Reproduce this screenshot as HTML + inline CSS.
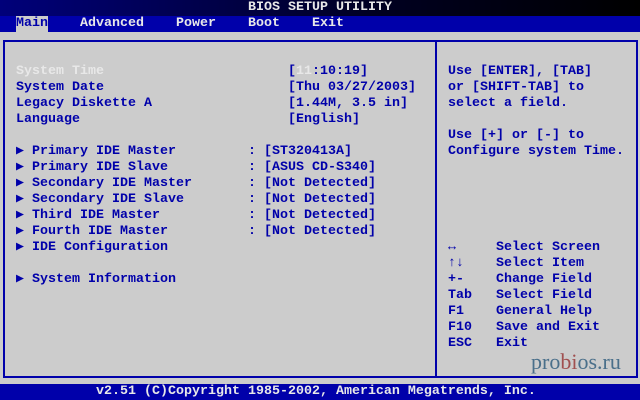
<!DOCTYPE html>
<html><head><meta charset="utf-8"><style>
*{margin:0;padding:0}
body{width:640px;height:400px;background:#cccccc;position:relative;overflow:hidden;font-family:"Liberation Mono",monospace;font-size:13.33px;font-weight:bold;line-height:16px;color:#0000aa}
.t{position:absolute;white-space:pre}
#title{position:absolute;left:0;top:0;width:640px;height:16px;background:linear-gradient(90deg,#00007a,#000020 60%,#000)}
#menu{position:absolute;left:0;top:16px;width:640px;height:16px;background:#0000aa}
#foot{position:absolute;left:0;top:384px;width:640px;height:16px;background:#0000aa}
.w{color:#e8e8e8}
#frame{position:absolute;left:3px;top:40px;width:631px;height:334px;border:2px solid #0000aa}
#div{position:absolute;left:435px;top:40px;width:2px;height:338px;background:#0000aa}
</style></head><body>
<div id="title"></div>
<div class="t w" style="left:248px;top:0">BIOS SETUP UTILITY</div>
<div id="menu"></div>
<div class="t" style="left:16px;top:16px;background:#cccccc;width:32px">Main</div>
<div class="t w" style="left:80px;top:16px">Advanced</div>
<div class="t w" style="left:176px;top:16px">Power</div>
<div class="t w" style="left:248px;top:16px">Boot</div>
<div class="t w" style="left:312px;top:16px">Exit</div>
<div id="frame"></div><div id="div"></div>
<div class="t w" style="left:16px;top:64px">System Time</div>
<div class="t" style="left:16px;top:80px">System Date
Legacy Diskette A
Language</div>
<div class="t" style="left:288px;top:64px">[<span class="w">11</span>:10:19]
[Thu 03/27/2003]
[1.44M, 3.5 in]
[English]</div>
<div class="t" style="left:16px;top:144px">▶
▶
▶
▶
▶
▶
▶

▶</div>
<div class="t" style="left:32px;top:144px">Primary IDE Master
Primary IDE Slave
Secondary IDE Master
Secondary IDE Slave
Third IDE Master
Fourth IDE Master
IDE Configuration

System Information</div>
<div class="t" style="left:248px;top:144px">: [ST320413A]
: [ASUS CD-S340]
: [Not Detected]
: [Not Detected]
: [Not Detected]
: [Not Detected]</div>
<div class="t" style="left:448px;top:64px">Use [ENTER], [TAB]
or [SHIFT-TAB] to
select a field.

Use [+] or [-] to
Configure system Time.</div>
<div class="t" style="left:448px;top:240px">↔
↑↓
+-
Tab
F1
F10
ESC</div>
<div class="t" style="left:496px;top:240px">Select Screen
Select Item
Change Field
Select Field
General Help
Save and Exit
Exit</div>
<div class="t" style="left:531px;top:350px;font-family:'Liberation Serif',serif;font-weight:normal;font-size:22px;line-height:24px;color:#4a6f8a">pro<span style="color:#a05050">bi</span>os.ru</div>
<div id="foot"></div>
<div class="t w" style="left:96px;top:384px">v2.51 (C)Copyright 1985-2002, American Megatrends, Inc.</div>
</body></html>
